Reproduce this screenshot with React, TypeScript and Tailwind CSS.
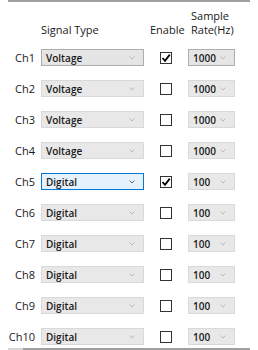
import React from 'react';

type Row = { ch: string; type: string; enabled: boolean; rate: string };

const rows: Row[] = [
  { ch: 'Ch1', type: 'Voltage', enabled: true, rate: '1000' },
  { ch: 'Ch2', type: 'Voltage', enabled: false, rate: '1000' },
  { ch: 'Ch3', type: 'Voltage', enabled: false, rate: '1000' },
  { ch: 'Ch4', type: 'Voltage', enabled: false, rate: '1000' },
  { ch: 'Ch5', type: 'Digital', enabled: true, rate: '100' },
  { ch: 'Ch6', type: 'Digital', enabled: false, rate: '100' },
  { ch: 'Ch7', type: 'Digital', enabled: false, rate: '100' },
  { ch: 'Ch8', type: 'Digital', enabled: false, rate: '100' },
  { ch: 'Ch9', type: 'Digital', enabled: false, rate: '100' },
  { ch: 'Ch10', type: 'Digital', enabled: false, rate: '100' },
];

function Chevron({ dark }: { dark?: boolean }) {
  return (
    <svg width="6" height="4" viewBox="0 0 6 4" className="shrink-0">
      <path d="M0.5 0.5 L3 3 L5.5 0.5" fill="none" stroke={dark ? '#606060' : '#b8b8b8'} strokeWidth="1" />
    </svg>
  );
}

function Combo({ value, state, width }: { value: string; state: 'disabled' | 'enabled' | 'focus'; width: string }) {
  const box =
    state === 'focus'
      ? 'bg-[#e5f1fb] border-[#0078d7]'
      : state === 'enabled'
        ? 'bg-[#e5e5e5] border-[#adadad]'
        : 'bg-[#e8e8e8] border-[#d9d9d9]';
  return (
    <div className={`${width} h-[17px] border ${box} flex items-center justify-between pl-[4px] pr-[8px]`}>
      <span className="font-semibold text-[10px] text-[#1a1a1a] leading-none">{value}</span>
      <Chevron dark={state === 'focus'} />
    </div>
  );
}

function Check({ checked }: { checked: boolean }) {
  return (
    <div className="w-[12px] h-[12px] border border-[#333333] bg-white flex items-center justify-center">
      {checked && (
        <svg width="10" height="10" viewBox="0 0 10 10">
          <path d="M1.5 5 L4 7.8 L8.8 1.6" fill="none" stroke="#000" strokeWidth="1.8" />
        </svg>
      )}
    </div>
  );
}

export default function App() {
  return (
    <div className="w-[258px] h-[350px] bg-white relative overflow-hidden text-[11px] text-[#1a1a1a]" style={{ fontFamily: '"Open Sans", "Noto Sans", sans-serif' }}>
      {/* top edge */}
      <div className="ml-[8px] w-[242px] h-[2px] bg-[#a0a0a0]" />

      {/* header */}
      <div className="flex items-end h-[34px] mt-[1px]">
        <div className="w-[41px]" />
        <div className="w-[109px] leading-[14px]">Signal Type</div>
        <div className="w-[41px] leading-[14px]">Enable</div>
        <div className="leading-[14px]">
          Sample
          <br />
          Rate(Hz)
        </div>
      </div>

      {/* rows */}
      <div className="flex flex-col gap-[14px] mt-[12px]">
        {rows.map((r, i) => (
          <div key={r.ch} className="flex items-center h-[17px]">
            <div className="w-[35px] text-right leading-none">{r.ch}</div>
            <div className="ml-[6px]">
              <Combo value={r.type} width="w-[103px]" state={i === 0 ? 'enabled' : i === 4 ? 'focus' : 'disabled'} />
            </div>
            <div className="ml-[16px]">
              <Check checked={r.enabled} />
            </div>
            <div className="ml-[16px]">
              <Combo value={r.rate} width="w-[47px]" state={i === 0 ? 'enabled' : 'disabled'} />
            </div>
          </div>
        ))}
      </div>

      {/* bottom scroll edge */}
      <div className="absolute left-[8px] bottom-0 flex w-[242px] h-[2px]">
        <div className="w-[15px] bg-[#d4d4d4]" />
        <div className="flex-1 bg-[#a0a0a0]" />
      </div>
    </div>
  );
}
